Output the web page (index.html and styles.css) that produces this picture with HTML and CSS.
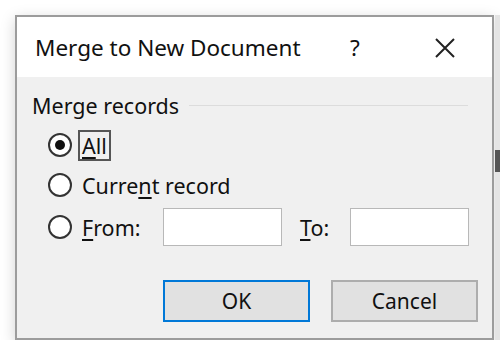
FILE: index.html
```html
<!DOCTYPE html>
<html lang="en">
<head>
    <meta charset="UTF-8">
    <title>Merge to New Document</title>
    <link rel="stylesheet" href="styles.css">
</head>
<body>
    <div class="dialog">
        <div class="titlebar">
            <span class="title">Merge to New Document</span>
            <span class="help">?</span>
            <svg class="close" width="22" height="22" viewBox="0 0 22 22">
                <path d="M2 2 L20 20 M20 2 L2 20" stroke="#222" stroke-width="2" fill="none"/>
            </svg>
        </div>
        <div class="content">
            <div class="group-head">
                <span>Merge records</span>
                <div class="rule"></div>
            </div>
            <div class="option first">
                <span class="radio checked"></span>
                <span class="label focus"><u>A</u>ll</span>
            </div>
            <div class="option">
                <span class="radio"></span>
                <span class="label">Curre<u>n</u>t record</span>
            </div>
            <div class="option range">
                <span class="radio"></span>
                <span class="label from"><u>F</u>rom:</span>
                <div class="field"></div>
                <span class="label to"><u>T</u>o:</span>
                <div class="field"></div>
            </div>
            <div class="buttons">
                <button class="btn default">OK</button>
                <button class="btn">Cancel</button>
            </div>
        </div>
    </div>
    <div class="edge"><div class="edge-mark"></div></div>
</body>
</html>
```

FILE: styles.css
```css
body {
    margin: 0;
    padding: 15px 0 0 15px;
    background: #fff;
    font-family: 'Noto Sans', sans-serif;
    color: #111;
    display: flex;
}
.dialog {
    width: 479px;
    height: 325px;
    box-sizing: border-box;
    border: 2px solid #9c9c9c;
    background: #f0f0f0;
    box-shadow: 0 4px 14px rgba(0, 0, 0, 0.18);
    flex-shrink: 0;
}
.titlebar {
    height: 60px;
    background: #fff;
    display: flex;
    align-items: center;
    padding-left: 18px;
    font-size: 22.5px;
}
.title {
    width: 315px;
}
.help {
    width: 84px;
}
.close {
    margin-top: 1px;
}
.content {
    padding: 14px 14px 0 15px;
    font-size: 21.5px;
}
.group-head {
    display: flex;
    align-items: center;
    height: 28px;
}
.rule {
    flex: 1;
    height: 1px;
    background: #dcdcdc;
    margin: 0 10px 0 10px;
}
.option {
    display: flex;
    align-items: center;
    height: 40px;
    padding-left: 16px;
}
.option.first {
    margin-top: 6px;
}
.option.range {
    height: 44px;
}
.radio {
    width: 20px;
    height: 20px;
    border: 2px solid #333;
    border-radius: 50%;
    background: #fff;
    display: flex;
    align-items: center;
    justify-content: center;
    flex-shrink: 0;
}
.radio.checked::after {
    content: '';
    width: 10px;
    height: 10px;
    border-radius: 50%;
    background: #111;
}
.label {
    margin-left: 10px;
}
.label u {
    text-decoration-thickness: 2px;
    text-underline-offset: 3px;
}
.focus {
    outline: 2px solid #555;
    outline-offset: 0;
    padding: 0 2px;
    margin-left: 8px;
    line-height: 27px;
}
.from {
    width: 81px;
}
.field {
    width: 117px;
    height: 36px;
    background: #fff;
    border: 1px solid #b8b8b8;
}
.to {
    margin-left: 18px;
    width: 50px;
}
.buttons {
    display: flex;
    justify-content: flex-end;
    gap: 21px;
    margin-top: 31px;
}
.btn {
    width: 147px;
    height: 42px;
    font-family: 'Noto Sans', sans-serif;
    font-size: 21px;
    color: #111;
    background: #e1e1e1;
    border: 2px solid #adadad;
}
.btn.default {
    border-color: #0078d7;
}
.edge {
    width: 6px;
    margin-left: 1px;
    height: 325px;
    background: #e4e4e4;
}
.edge-mark {
    margin-top: 135px;
    height: 22px;
    background: #555;
}
```
